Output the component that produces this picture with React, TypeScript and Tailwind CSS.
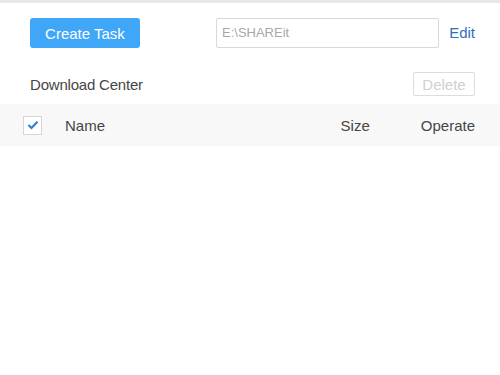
import React from "react";

export default function App() {
  return (
    <div className="w-[500px] h-[375px] bg-white overflow-hidden" style={{ fontFamily: '"Liberation Sans", Arial, sans-serif' }}>
      <div className="h-[3px] bg-[#e8e8e8]" />
      <div className="flex items-center pl-[30px] pr-[25px] pt-[15px]">
        <button className="w-[110px] h-[30px] rounded-[3px] bg-[#40a6f7] text-white text-[15px] leading-none">Create Task</button>
        <div className="ml-[76px] w-[223px] h-[30px] border border-[#d9d9d9] rounded-[2px] flex items-center pl-[5px] text-[13px] text-[#a8a8a8]">E:\SHAREit</div>
        <span className="ml-auto text-[15px] text-[#2f6fbd]">Edit</span>
      </div>
      <div className="flex items-center justify-between pl-[30px] pr-[25px] mt-[24px] h-[24px]">
        <span className="text-[15px] text-[#464646] tracking-[-0.2px] pt-[2px]">Download Center</span>
        <button className="w-[62px] h-[24px] border border-[#dcdcdc] rounded-[2px] text-[15px] text-[#d0d0d0] leading-none">Delete</button>
      </div>
      <div className="mt-[8px] h-[42px] bg-[#f8f8f8] flex items-center pl-[23px] pr-[25px] text-[15px] text-[#464646]">
        <div className="w-[19px] h-[19px] border border-[#d6d6d6] bg-white flex items-center justify-center">
          <svg width="12" height="10" viewBox="0 0 12 10">
            <path d="M1.5 5 L4.5 8 L10.5 1.8" fill="none" stroke="#2f7fd0" strokeWidth="2.2" />
          </svg>
        </div>
        <span className="ml-[23px] pt-[2px]">Name</span>
        <span className="ml-auto mr-[51px] pt-[2px]">Size</span>
        <span className="pt-[2px]">Operate</span>
      </div>
    </div>
  );
}
